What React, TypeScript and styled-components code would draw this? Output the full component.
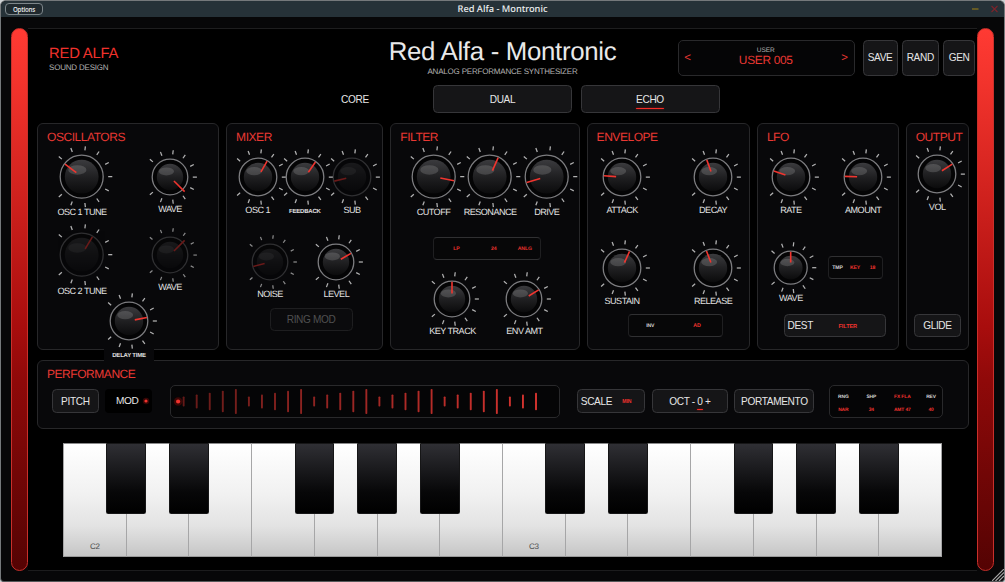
import React from "react";
import styled, { createGlobalStyle, css } from "styled-components";

const RED = "#ea3833";

const GlobalStyle = createGlobalStyle`
  * { box-sizing: border-box; }
  body {
    margin: 0;
    background: #cfd2d4;
    font-family: "Liberation Sans", Arial, sans-serif;
    text-rendering: geometricPrecision;
    overflow: hidden;
  }
`;

const Window = styled.div`
  position: relative;
  width: 1005px;
  height: 582px;
  display: flex;
  flex-direction: column;
  background: #070708;
  border: 1px solid #75797b;
  border-bottom-color: #55585a;
  border-radius: 6px 6px 4px 4px;
  overflow: hidden;
`;

const TitleBar = styled.header`
  height: 16px;
  flex: none;
  display: grid;
  grid-template-columns: 200px 1fr 200px;
  align-items: center;
  background: #263238;
  color: #eceff0;
`;

const OptionsButton = styled.button`
  width: 38px;
  height: 12px;
  margin-left: 4px;
  padding: 0;
  border: 1px solid #7d868a;
  border-radius: 4px;
  background: #20292e;
  color: #e6e9ea;
  font: 600 6.2px/9px "Open Sans", sans-serif;
  letter-spacing: -0.2px;
`;

const WindowTitle = styled.div`
  text-align: center;
  font: 500 9.25px/16px "Noto Sans", sans-serif;
`;

const WindowControls = styled.svg`
  justify-self: end;
  margin-right: 5px;
`;

const Body = styled.main`
  flex: 1;
  display: flex;
  padding: 11px 10px 11px;
`;

const SideStrip = styled.div`
  width: 17px;
  height: 543px;
  flex: none;
  border: 1px solid #c9302b;
  border-radius: 9px;
  background: linear-gradient(#ff3a33 0%, #f2332c 10%, #a80d0d 55%, #8f0909 65%, #540303 100%);
`;

const Face = styled.div`
  flex: 1;
  min-width: 0;
  height: 543px;
  border-top: 1px solid #1e1e1f;
  border-bottom: 1px solid #1c1c1d;
  padding-left: 9px;
  background: #000;
`;

const Header = styled.div`
  height: 56px;
  display: grid;
  grid-template-columns: 300px 331px 1fr;
`;

const Brand = styled.div`
  padding: 17px 0 0 12px;
`;

const BrandName = styled.div`
  color: #f0322c;
  font-size: 14.8px;
  letter-spacing: -0.2px;
  line-height: 16px;
`;

const Caption = styled.div`
  color: #b2b2b2;
  font-size: 8px;
  letter-spacing: -0.2px;
  line-height: 11px;
`;

const Title = styled.div`
  padding-top: 9px;
  text-align: center;
`;

const ProductName = styled.h1`
  margin: 0;
  height: 28px;
  color: #e9e9e9;
  font-size: 25.8px;
  letter-spacing: -0.3px;
  line-height: 29px;
  font-weight: 400;
`;

const Presets = styled.div`
  display: flex;
  padding: 10.6px 0 0 10px;
`;

const PresetBox = styled.div`
  width: 176.5px;
  height: 36px;
  margin-right: 8px;
  display: grid;
  grid-template-columns: 17px 1fr 18px;
  align-items: center;
  text-align: center;
  border: 1px solid #29292b;
  border-radius: 5px;
  background: #050506;
  color: ${RED};
  font-size: 11.5px;
`;

const PresetBank = styled.div`
  color: #b0b0b0;
  font-size: 6.5px;
  line-height: 7px;
`;

const PresetName = styled.div`
  padding-bottom: 3px;
  font-size: 11.9px;
  letter-spacing: -0.3px;
  line-height: 12px;
`;

const Button = styled.button<{ $w: number; $h: number; $dim?: boolean }>`
  width: ${(p) => p.$w}px;
  height: ${(p) => p.$h}px;
  flex: none;
  padding: 0;
  border: 1px solid ${(p) => (p.$dim ? "#1e1e20" : "#363639")};
  border-radius: 4.5px;
  background: ${(p) => (p.$dim ? "#0b0b0d" : "#151517")};
  color: ${(p) => (p.$dim ? "#505051" : "#e6e6e6")};
  font: 400 10.1px/11px "Liberation Sans", Arial, sans-serif;
  letter-spacing: -0.35px;
  white-space: pre;
`;

const PresetButton = styled(Button)`
  margin-right: 4px;
`;

const Tabs = styled.div`
  display: flex;
  gap: 8.5px;
  height: 38px;
  margin-left: 248.5px;
`;

const Tab = styled(Button)<{ $plain?: boolean }>`
  ${(p) => p.$plain && css`
    border-color: transparent;
    background: transparent;
  `}
`;

const Underlined = styled.span<{ $gap: number }>`
  display: inline-block;
  position: relative;
  &::after {
    content: "";
    position: absolute;
    left: 0;
    right: -0.5px;
    bottom: -${(p) => p.$gap}px;
    height: 1.5px;
    border-radius: 1px;
    background: #f42d28;
    box-shadow: 0 0 2px #a91512;
  }
`;

const Panels = styled.div`
  display: grid;
  grid-template-columns: 182.3px 157.4px 189.5px 163.5px 142px 63.5px;
  column-gap: 6.8px;
  height: 227px;
`;

const Panel = styled.section`
  height: 227px;
  border: 1px solid #272729;
  border-radius: 6px;
  background: #08080a;
`;

const PanelTitle = styled.h2`
  margin: 0;
  height: 22px;
  padding-left: 9px;
  color: ${RED};
  font-size: 12px;
  letter-spacing: -0.45px;
  line-height: 26px;
  font-weight: 400;
`;

const KnobRow = styled.div<{ $cols: string; $top?: number; $left?: number }>`
  display: grid;
  grid-template-columns: ${(p) => p.$cols};
  justify-items: center;
  align-items: start;
  margin-top: ${(p) => p.$top ?? 0}px;
  margin-left: ${(p) => p.$left ?? 0}px;
`;

const KnobCell = styled.div<{ $drop?: number }>`
  display: flex;
  flex-direction: column;
  align-items: center;
  padding-top: ${(p) => p.$drop ?? 0}px;
`;

const KnobLabel = styled.div<{ $small?: boolean }>`
  height: 11.5px;
  color: #e2e2e2;
  font-size: ${(p) => (p.$small ? 6 : 9.1)}px;
  letter-spacing: ${(p) => (p.$small ? -0.22 : -0.52)}px;
  font-weight: ${(p) => (p.$small ? 700 : 400)};
  line-height: ${(p) => (p.$small ? 14 : 11.4)}px;
  white-space: nowrap;
`;

const Dial = styled.svg`
  display: block;
  overflow: visible;
`;

const DelayCell = styled.div`
  position: relative;
  z-index: 1;
  width: 50px;
  height: 68.5px;
  display: flex;
  justify-content: center;
  margin: -4px 0 0 66px;
  background: linear-gradient(transparent 30px, #08080a 30px);
`;

const Readout = styled.div<{ $w: number; $top?: number; $left?: number; $cols: string }>`
  width: ${(p) => p.$w}px;
  height: 22.5px;
  margin-top: ${(p) => p.$top ?? 0}px;
  margin-left: ${(p) => p.$left ?? 0}px;
  padding-top: 1px;
  display: grid;
  grid-template-columns: ${(p) => p.$cols};
  align-items: center;
  justify-items: center;
  border: 1px solid #1f1f21;
  border-top-color: #303032;
  border-bottom-color: #303032;
  border-radius: 4px;
  background: #070708;
`;

const Micro = styled.span<{ $tone?: "red" | "white"; $size?: number }>`
  color: ${(p) => (p.$tone === "white" ? "#d6d6d6" : "#f0332e")};
  font-size: ${(p) => p.$size ?? 5.1}px;
  font-weight: 700;
  letter-spacing: -0.1px;
  line-height: 6px;
  white-space: nowrap;
`;

const ButtonSlot = styled.div<{ $top: number; $left: number }>`
  padding-top: ${(p) => p.$top}px;
  padding-left: ${(p) => p.$left}px;
`;

const ValueButton = styled(Button)<{ $cols: string }>`
  display: grid;
  grid-template-columns: ${(p) => p.$cols};
  align-items: center;
  text-align: left;
  padding-left: 2.6px;
`;

const Performance = styled.section`
  width: 932px;
  height: 69px;
  margin-top: 10px;
  border: 1px solid #272729;
  border-radius: 6px;
  background: #08080a;
`;

const PerformanceRow = styled.div`
  height: 36px;
  display: flex;
  align-items: center;
  padding-left: 13.6px;
`;

const PerformanceButton = styled(Button)`
  padding-top: 1px;
`;

const PerformanceValue = styled(ValueButton)`
  padding-top: 1px;
`;

const ModButton = styled.div`
  width: 46.5px;
  height: 24.5px;
  margin: 0 18px 0 6px;
  display: flex;
  align-items: center;
  justify-content: flex-end;
  gap: 3px;
  padding-right: 2px;
  border-radius: 4px;
  background: #000;
  color: #e6e6e6;
  font-size: 10.1px;
  letter-spacing: -0.3px;
`;

const Ribbon = styled.div`
  width: 390px;
  height: 33px;
  margin-right: 17.6px;
  border: 1px solid #29292b;
  border-radius: 5px;
  background: #050506;
`;

const Gap = styled.div<{ $w: number }>`
  width: ${(p) => p.$w}px;
  flex: none;
`;

const StatusGrid = styled.div`
  width: 114px;
  height: 33px;
  display: grid;
  grid-template-columns: 27.5px 28.5px 33.5px 24px;
  grid-template-rows: 12.6px 12.6px;
  align-content: start;
  align-items: center;
  justify-items: center;
  padding-top: 6.6px;
  border: 1px solid #29292b;
  border-radius: 5px;
  background: #050506;
`;

const Keyboard = styled.div`
  display: flex;
  width: 879px;
  height: 114px;
  margin: 14px 0 0 26px;
`;

const WhiteKey = styled.div`
  position: relative;
  flex: 1;
  display: flex;
  align-items: flex-end;
  justify-content: center;
  padding-bottom: 4px;
  border-left: 1px solid #a6a6a7;
  border-top: 1px solid #8a8a8b;
  border-bottom: 1px solid #999;
  background: linear-gradient(#fff 0%, #f1f1f1 45%, #e3e3e3 73%, #c6c6c6 100%);
  color: #4a4a4a;
  font-size: 8px;
  letter-spacing: -0.2px;
  line-height: 10px;
  &:last-child { border-right: 1px solid #a6a6a7; }
`;

const BlackKey = styled.div`
  position: absolute;
  z-index: 1;
  top: -1px;
  right: -20.3px;
  width: 39.6px;
  height: 71px;
  border: 1px solid #161617;
  border-radius: 0 0 1.5px 1.5px;
  background: linear-gradient(#2f2f34 0%, #1b1b1e 35%, #070708 70%, #000 100%);
`;

const ResizeGrip = styled.svg`
  position: absolute;
  right: 0;
  bottom: 0;
`;

const TICK_STEP = 27.7;

type KnobProps = {
  label: string;
  r: number;
  angle: number;
  dim?: boolean;
  faintTicks?: boolean;
  drop?: number;
  reach?: number;
  small?: boolean;
};

function Knob({ label, r, angle, dim, faintTicks, drop, reach = 0.96, small }: KnobProps) {
  const h = r + 9;
  const body = r - 4.8;
  const id = "k" + React.useId().replace(/[^a-zA-Z0-9]/g, "");
  return (
    <KnobCell $drop={drop}>
      <Dial width={h * 2} height={h * 2} viewBox={`${-h} ${-h} ${h * 2} ${h * 2}`}>
        <defs>
          <linearGradient id={id} x1="0" y1="0" x2="0" y2="1">
            <stop offset="0" stopColor="#3b3b3e" />
            <stop offset="0.5" stopColor="#202022" />
            <stop offset="1" stopColor="#0b0b0c" />
          </linearGradient>
        </defs>
        {Array.from({ length: 11 }, (_, i) => (
          <line
            key={i}
            x1={r + (faintTicks ? 5.4 : 4.8)}
            x2={r + 8.9}
            y1="0"
            y2="0"
            stroke={faintTicks ? "#8a8a8b" : "#b2b2b3"}
            strokeWidth="1.25"
            transform={`rotate(${(i - 5) * TICK_STEP})`}
          />
        ))}
        <g opacity={dim ? 0.34 : 1}>
          <circle r={r - 0.2} fill="#040405" stroke="#7c7c7f" strokeWidth="1.3" />
          <circle r={body} fill={`url(#${id})`} />
          <ellipse cx={-r * 0.2} cy={-r * 0.31} rx={r * 0.42} ry={r * 0.22} fill="#fff" opacity="0.15" />
        </g>
        <line
          x1="0"
          x2="0"
          y1={-r * 0.31}
          y2={-r * reach}
          stroke={dim ? "#6a1a19" : "#f0352f"}
          strokeWidth="1.6"
          transform={`rotate(${angle})`}
        />
      </Dial>
      <KnobLabel $small={small}>{label}</KnobLabel>
    </KnobCell>
  );
}

const RIBBON_HEIGHTS = [10, 14, 17.5, 21.5, 25];

function RibbonScale() {
  return (
    <svg width="388" height="31" viewBox="170.5 0 388 31" style={{ display: "block" }}>
      <circle cx="177.6" cy="15.5" r="4.3" fill="#3a0706" />
      <circle cx="177.6" cy="15.5" r="2.1" fill="#f0322d" />
      {Array.from({ length: 28 }, (_, i) => {
        const len = RIBBON_HEIGHTS[i % 5];
        return (
          <rect
            key={i}
            x={182.2 + i * 13.05}
            y={15.5 - len / 2}
            width="1.9"
            height={len}
            rx="0.8"
            fill={RED}
            opacity={0.42 + (i / 27) * 0.5}
          />
        );
      })}
    </svg>
  );
}

function Led() {
  return (
    <svg width="8" height="8" viewBox="-4 -4 8 8">
      <circle r="3.2" fill="#350605" />
      <circle r="1.6" fill="#f0322d" />
    </svg>
  );
}

const SHARP_AFTER = new Set([0, 1, 3, 4, 5]);
const STATUS: Array<[string, "red" | "white"]> = [
  ["RNG", "white"], ["SHP", "white"], ["FX FLA", "red"], ["REV", "white"],
  ["NAR", "red"], ["34", "red"], ["AMT 47", "red"], ["40", "red"],
];

export default function App() {
  return (
    <>
      <GlobalStyle />
      <Window>
        <TitleBar>
          <OptionsButton>Options</OptionsButton>
          <WindowTitle>Red Alfa - Montronic</WindowTitle>
          <WindowControls width="28" height="16" viewBox="0 0 28 16">
            <path d="M1 8h6.5" stroke="#7a681f" strokeWidth="1.3" />
            <path d="M20.5 5l6 6M26.5 5l-6 6" stroke="#7c242b" strokeWidth="1.1" />
          </WindowControls>
        </TitleBar>
        <Body>
          <SideStrip />
          <Face>
            <Header>
              <Brand>
                <BrandName>RED ALFA</BrandName>
                <Caption>SOUND DESIGN</Caption>
              </Brand>
              <Title>
                <ProductName>Red Alfa - Montronic</ProductName>
                <Caption>ANALOG PERFORMANCE SYNTHESIZER</Caption>
              </Title>
              <Presets>
                <PresetBox>
                  <span>&lt;</span>
                  <div>
                    <PresetBank>USER</PresetBank>
                    <PresetName>USER 005</PresetName>
                  </div>
                  <span>&gt;</span>
                </PresetBox>
                <PresetButton $w={35.2} $h={36}>SAVE</PresetButton>
                <PresetButton $w={37.2} $h={36}>RAND</PresetButton>
                <PresetButton $w={32.5} $h={36}>GEN</PresetButton>
              </Presets>
            </Header>
            <Tabs>
              <Tab $w={139} $h={28} $plain>CORE</Tab>
              <Tab $w={139} $h={28}>DUAL</Tab>
              <Tab $w={139} $h={28}><Underlined $gap={4.7}>ECHO</Underlined></Tab>
            </Tabs>
            <Panels>
              <Panel>
                <PanelTitle>OSCILLATORS</PanelTitle>
                <KnobRow $cols="88px 88px">
                  <Knob label="OSC 1 TUNE" r={21.7} angle={-53} />
                  <Knob label="WAVE" r={18} angle={135} drop={3.7} reach={1.15} />
                </KnobRow>
                <KnobRow $cols="88px 88px" $top={5.4}>
                  <Knob label="OSC 2 TUNE" r={21.7} angle={31} dim />
                  <Knob label="WAVE" r={18} angle={45} drop={3.7} reach={1.15} dim faintTicks />
                </KnobRow>
                <DelayCell>
                  <Knob label="DELAY TIME" r={19} angle={79} small />
                </DelayCell>
              </Panel>
              <Panel>
                <PanelTitle>MIXER</PanelTitle>
                <KnobRow $cols="47.2px 47.2px 47.2px" $top={2.7} $left={7}>
                  <Knob label="OSC 1" r={19} angle={30} />
                  <Knob label="FEEDBACK" r={19} angle={35} small />
                  <Knob label="SUB" r={19} angle={-103} dim />
                </KnobRow>
                <KnobRow $cols="66.3px 66.3px" $top={18.5} $left={9.8}>
                  <Knob label="NOISE" r={18} angle={-105} dim faintTicks />
                  <Knob label="LEVEL" r={18} angle={60} />
                </KnobRow>
                <ButtonSlot $top={8} $left={42.5}>
                  <Button $w={83} $h={22.6} $dim>RING MOD</Button>
                </ButtonSlot>
              </Panel>
              <Panel>
                <PanelTitle>FILTER</PanelTitle>
                <KnobRow $cols="56.7px 56.7px 56.7px" $left={13.8}>
                  <Knob label="CUTOFF" r={21.7} angle={101} />
                  <Knob label="RESONANCE" r={21.7} angle={24} />
                  <Knob label="DRIVE" r={21.7} angle={-106} />
                </KnobRow>
                <Readout $w={107.5} $top={18.4} $left={42} $cols="44px 31px 31px">
                  <Micro>LP</Micro>
                  <Micro>24</Micro>
                  <Micro>ANLG</Micro>
                </Readout>
                <KnobRow $cols="72px 72px" $top={12.3} $left={25.2}>
                  <Knob label="KEY TRACK" r={18} angle={0} />
                  <Knob label="ENV AMT" r={18} angle={58} />
                </KnobRow>
              </Panel>
              <Panel>
                <PanelTitle>ENVELOPE</PanelTitle>
                <KnobRow $cols="69px 113px" $top={2.7}>
                  <Knob label="ATTACK" r={19} angle={-86} />
                  <Knob label="DECAY" r={19} angle={-20} />
                </KnobRow>
                <KnobRow $cols="69px 113px" $top={23.5}>
                  <Knob label="SUSTAIN" r={19} angle={24.5} />
                  <Knob label="RELEASE" r={19} angle={-21} />
                </KnobRow>
                <Readout $w={95.5} $top={7.1} $left={40} $cols="43.5px 50px">
                  <Micro $tone="white">INV</Micro>
                  <Micro $size={5.3}>AD</Micro>
                </Readout>
              </Panel>
              <Panel>
                <PanelTitle>LFO</PanelTitle>
                <KnobRow $cols="66px 78.6px" $top={2.7}>
                  <Knob label="RATE" r={19} angle={-71} />
                  <Knob label="AMOUNT" r={19} angle={-88} />
                </KnobRow>
                <KnobRow $cols="66px 63px" $top={25.8}>
                  <Knob label="WAVE" r={16.7} angle={0} />
                  <Readout $w={54.7} $top={14.4} $cols="17px 18px 17px">
                    <Micro $tone="white">TMP</Micro>
                    <Micro>KEY</Micro>
                    <Micro>18</Micro>
                  </Readout>
                </KnobRow>
                <ButtonSlot $top={9.4} $left={26}>
                  <ValueButton $w={102} $h={22.6} $cols="51px 1fr">
                    DEST
                    <Micro $size={5.6}>FILTER</Micro>
                  </ValueButton>
                </ButtonSlot>
              </Panel>
              <Panel>
                <PanelTitle>OUTPUT</PanelTitle>
                <KnobRow $cols="61px">
                  <Knob label="VOL" r={19} angle={57} />
                </KnobRow>
                <ButtonSlot $top={100.8} $left={7}>
                  <Button $w={47.5} $h={22.6}>GLIDE</Button>
                </ButtonSlot>
              </Panel>
            </Panels>
            <Performance>
              <PanelTitle>PERFORMANCE</PanelTitle>
              <PerformanceRow>
                <PerformanceButton $w={47.5} $h={24.8}>PITCH</PerformanceButton>
                <ModButton>
                  MOD
                  <Led />
                </ModButton>
                <Ribbon>
                  <RibbonScale />
                </Ribbon>
                <PerformanceValue $w={68} $h={24.8} $cols="41.5px 1fr">
                  SCALE
                  <Micro>MIN</Micro>
                </PerformanceValue>
                <Gap $w={6.5} />
                <PerformanceButton $w={76.5} $h={24.8}>OCT - <Underlined $gap={3.5}>0</Underlined> +</PerformanceButton>
                <Gap $w={6.2} />
                <PerformanceButton $w={80} $h={24.8}>PORTAMENTO</PerformanceButton>
                <Gap $w={14.2} />
                <StatusGrid>
                  {STATUS.map(([text, tone]) => (
                    <Micro key={text} $tone={tone} $size={4.9}>{text}</Micro>
                  ))}
                </StatusGrid>
              </PerformanceRow>
            </Performance>
            <Keyboard>
              {Array.from({ length: 14 }, (_, i) => (
                <WhiteKey key={i}>
                  {i % 7 === 0 ? `C${2 + i / 7}` : null}
                  {SHARP_AFTER.has(i % 7) && <BlackKey />}
                </WhiteKey>
              ))}
            </Keyboard>
          </Face>
          <SideStrip />
        </Body>
        <ResizeGrip width="12" height="12" viewBox="0 0 12 12">
          <path d="M0 12L12 0M3.5 12L12 3.5M7 12L12 7" stroke="#a5a5a5" strokeWidth="1.2" />
        </ResizeGrip>
      </Window>
    </>
  );
}
